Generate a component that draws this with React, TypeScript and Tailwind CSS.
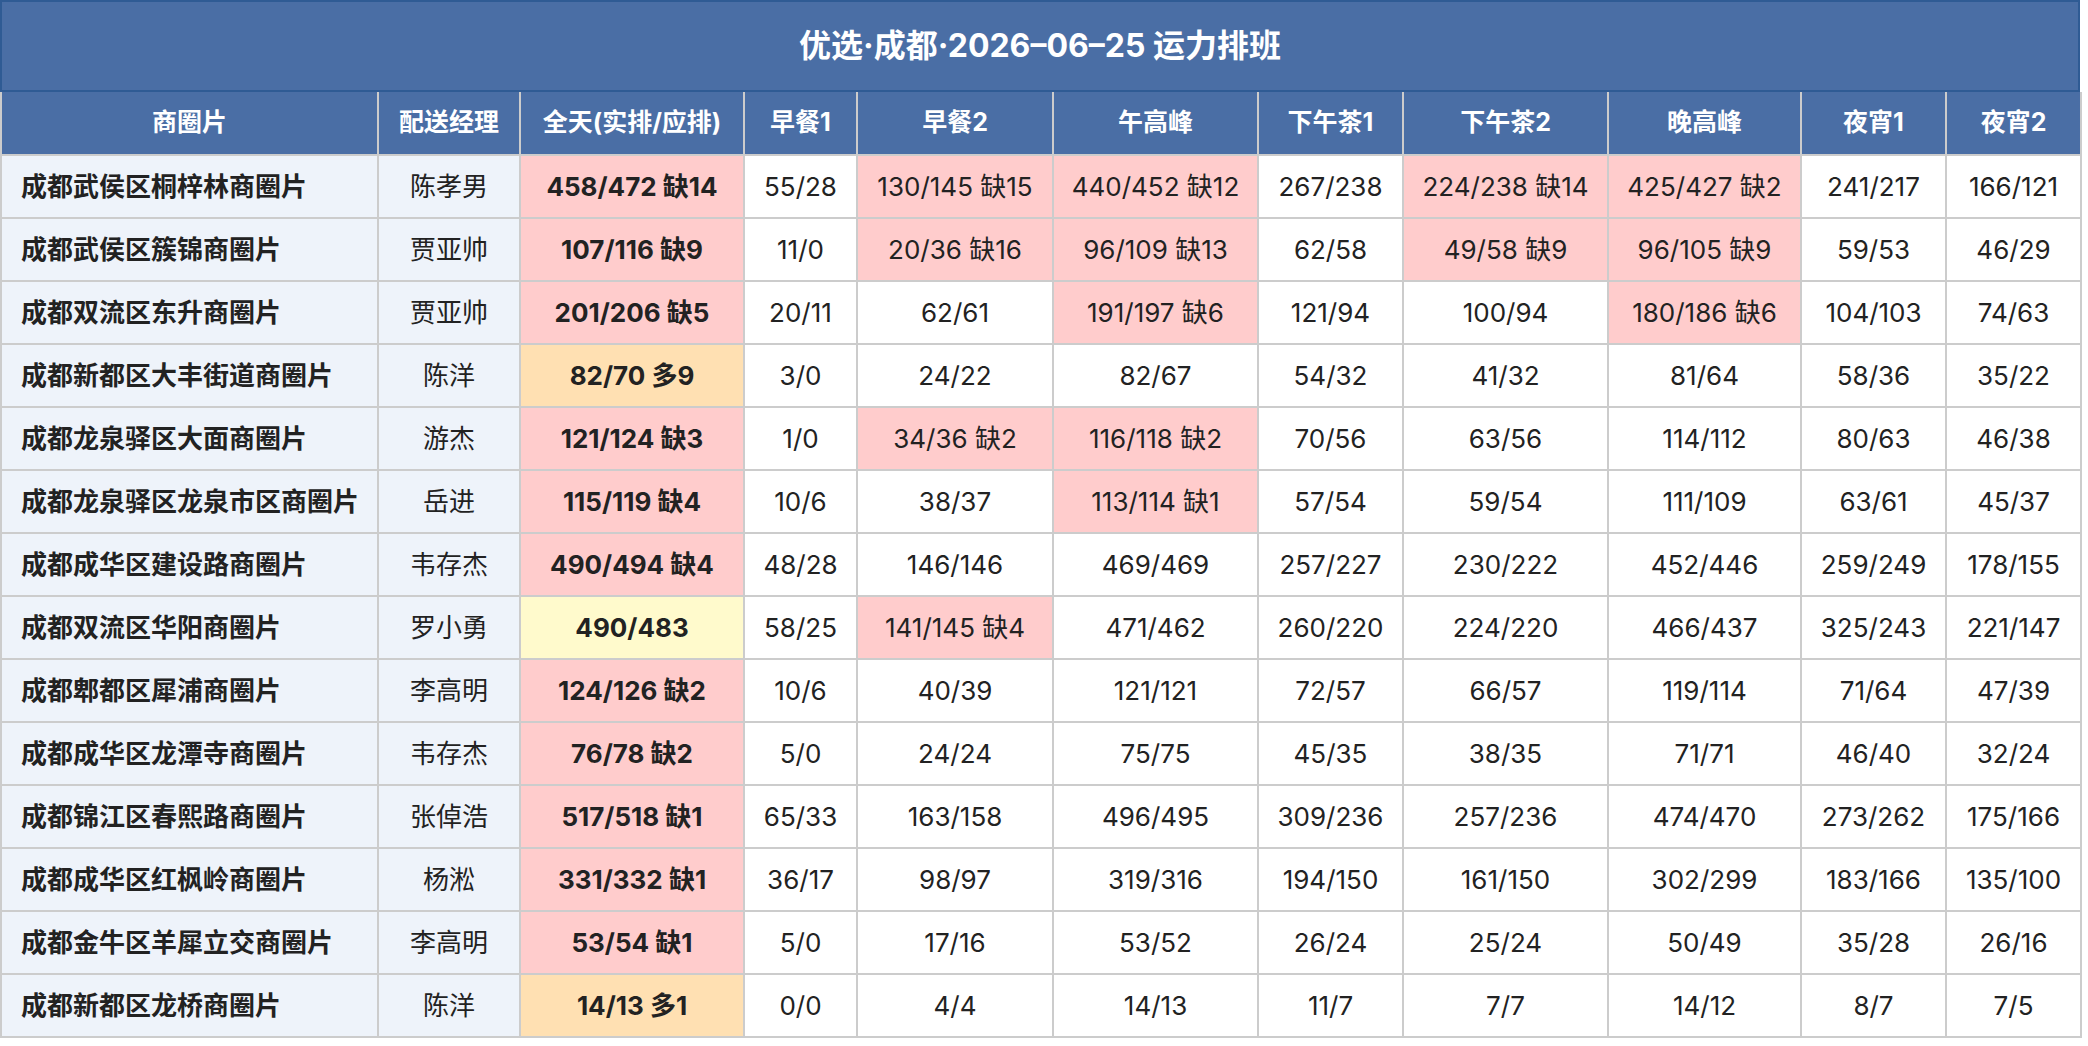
import React from "react";

type Row = { area: string; mgr: string; cells: string[]; yellow?: boolean };

const rows: Row[] = [
  { area: "成都武侯区桐梓林商圈片", mgr: "陈孝男", cells: ["458/472 缺14", "55/28", "130/145 缺15", "440/452 缺12", "267/238", "224/238 缺14", "425/427 缺2", "241/217", "166/121"] },
  { area: "成都武侯区簇锦商圈片", mgr: "贾亚帅", cells: ["107/116 缺9", "11/0", "20/36 缺16", "96/109 缺13", "62/58", "49/58 缺9", "96/105 缺9", "59/53", "46/29"] },
  { area: "成都双流区东升商圈片", mgr: "贾亚帅", cells: ["201/206 缺5", "20/11", "62/61", "191/197 缺6", "121/94", "100/94", "180/186 缺6", "104/103", "74/63"] },
  { area: "成都新都区大丰街道商圈片", mgr: "陈洋", cells: ["82/70 多9", "3/0", "24/22", "82/67", "54/32", "41/32", "81/64", "58/36", "35/22"] },
  { area: "成都龙泉驿区大面商圈片", mgr: "游杰", cells: ["121/124 缺3", "1/0", "34/36 缺2", "116/118 缺2", "70/56", "63/56", "114/112", "80/63", "46/38"] },
  { area: "成都龙泉驿区龙泉市区商圈片", mgr: "岳进", cells: ["115/119 缺4", "10/6", "38/37", "113/114 缺1", "57/54", "59/54", "111/109", "63/61", "45/37"] },
  { area: "成都成华区建设路商圈片", mgr: "韦存杰", cells: ["490/494 缺4", "48/28", "146/146", "469/469", "257/227", "230/222", "452/446", "259/249", "178/155"] },
  { area: "成都双流区华阳商圈片", mgr: "罗小勇", yellow: true, cells: ["490/483", "58/25", "141/145 缺4", "471/462", "260/220", "224/220", "466/437", "325/243", "221/147"] },
  { area: "成都郫都区犀浦商圈片", mgr: "李高明", cells: ["124/126 缺2", "10/6", "40/39", "121/121", "72/57", "66/57", "119/114", "71/64", "47/39"] },
  { area: "成都成华区龙潭寺商圈片", mgr: "韦存杰", cells: ["76/78 缺2", "5/0", "24/24", "75/75", "45/35", "38/35", "71/71", "46/40", "32/24"] },
  { area: "成都锦江区春熙路商圈片", mgr: "张倬浩", cells: ["517/518 缺1", "65/33", "163/158", "496/495", "309/236", "257/236", "474/470", "273/262", "175/166"] },
  { area: "成都成华区红枫岭商圈片", mgr: "杨淞", cells: ["331/332 缺1", "36/17", "98/97", "319/316", "194/150", "161/150", "302/299", "183/166", "135/100"] },
  { area: "成都金牛区羊犀立交商圈片", mgr: "李高明", cells: ["53/54 缺1", "5/0", "17/16", "53/52", "26/24", "25/24", "50/49", "35/28", "26/16"] },
  { area: "成都新都区龙桥商圈片", mgr: "陈洋", cells: ["14/13 多1", "0/0", "4/4", "14/13", "11/7", "7/7", "14/12", "8/7", "7/5"] },
];

const headers = ["商圈片", "配送经理", "全天(实排/应排)", "早餐1", "早餐2", "午高峰", "下午茶1", "下午茶2", "晚高峰", "夜宵1", "夜宵2"];
const widths = [
  "w-[377px]",
  "w-[142px]",
  "w-[224px]",
  "w-[113px]",
  "w-[196px]",
  "w-[205px]",
  "w-[145px]",
  "w-[205px]",
  "w-[193px]",
  "w-[145px]",
  "w-[135px]",
];

function cellBg(v: string, first: boolean, yellow?: boolean) {
  if (v.includes("缺")) return "bg-[#ffcccc]";
  if (v.includes("多")) return "bg-[#ffe0b2]";
  if (first && yellow) return "bg-[#fffacc]";
  return "bg-white";
}

export default function App() {
  return (
    <div
      className="w-[2088px] h-[1046px] bg-white text-[#222222]"
      style={{ fontFamily: 'Inter, "Noto Sans CJK SC", sans-serif' }}
    >
      <div className="w-[2080px]">
        <div className="h-[92px] border-2 border-[#2f5b94] bg-[#4a6ea5] flex items-center justify-center text-white font-bold text-[32px]">
          优选·成都·2026–06–25 运力排班
        </div>
        <table className="w-[2080px] table-fixed border-collapse">
          <colgroup>
            {widths.map((w, i) => (
              <col key={i} className={w} />
            ))}
          </colgroup>
          <thead>
            <tr className="h-[63px]">
              {headers.map((h, i) => (
                <th
                  key={i}
                  className="border-2 border-t-0 border-[#cccccc] bg-[#4a6ea5] text-white font-bold text-[25px] text-center p-0"
                >
                  {h}
                </th>
              ))}
            </tr>
          </thead>
          <tbody>
            {rows.map((r, ri) => (
              <tr key={ri} className="h-[63px]">
                <td className="border-2 border-[#cccccc] bg-[#eef3fa] font-bold text-[26px] text-left pl-[19px] p-0 whitespace-nowrap">
                  {r.area}
                </td>
                <td className="border-2 border-[#cccccc] bg-[#eef3fa] text-[26px] text-center p-0">
                  {r.mgr}
                </td>
                {r.cells.map((c, ci) => (
                  <td
                    key={ci}
                    className={`border-2 border-[#cccccc] text-[26px] text-center p-0 whitespace-nowrap ${cellBg(c, ci === 0, r.yellow)} ${ci === 0 ? "font-bold" : "font-normal"}`}
                  >
                    {c}
                  </td>
                ))}
              </tr>
            ))}
          </tbody>
        </table>
      </div>
    </div>
  );
}
